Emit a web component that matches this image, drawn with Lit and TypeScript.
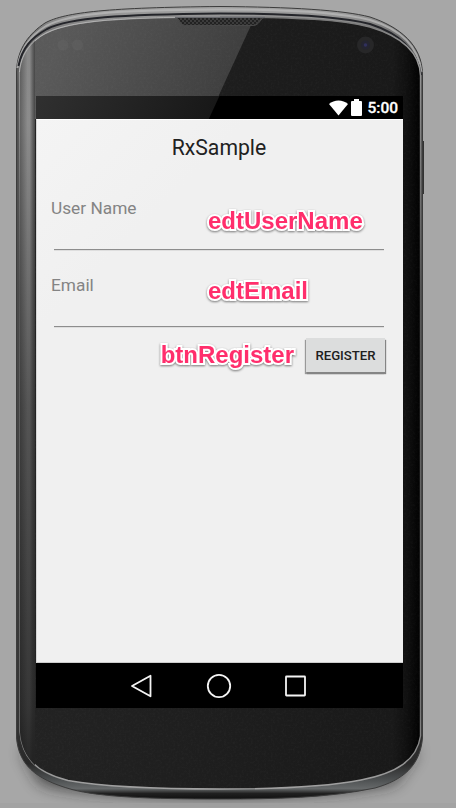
import { LitElement, html, css } from "lit";
import { customElement, property } from "lit/decorators.js";

@customElement("phone-shell")
class PhoneShell extends LitElement {
  static styles = css`
    :host { display: block; width: 456px; height: 808px; }
    svg { display: block; }
  `;
  render() {
    const inner = "M19.500 72 C21 56 29 42 46 33 C72 20 125 17 220 17 C300 17 342 20 370 27 C400 36 420 52 420.500 76 V736 C417 760 397 773 361 780 C325 787 275 789 220 789 C155 789 105 787 68 780.500 C34 772 22 756 20 732 Z";
    return html`<svg width="456" height="808" viewBox="0 0 456 808">
      <defs>
        <linearGradient id="rim" x1="0" y1="0" x2="0" y2="1">
          <stop offset="0" stop-color="#a6a6a6"/><stop offset=".03" stop-color="#777"/>
          <stop offset=".1" stop-color="#555"/><stop offset=".9" stop-color="#343434"/>
          <stop offset=".955" stop-color="#292929"/><stop offset=".975" stop-color="#4c4f50"/><stop offset=".987" stop-color="#66696a"/><stop offset=".993" stop-color="#202020"/><stop offset="1" stop-color="#111"/>
        </linearGradient>
        <linearGradient id="edge" x1="0" y1="0" x2="0" y2="1">
          <stop offset="0" stop-color="#777"/><stop offset=".05" stop-color="#999"/>
          <stop offset=".35" stop-color="#555"/><stop offset=".9" stop-color="#777"/><stop offset="1" stop-color="#a2a2a2"/>
        </linearGradient>
        <linearGradient id="face" x1="0" y1="0" x2="1" y2="0">
          <stop offset="0" stop-color="#232323"/><stop offset=".93" stop-color="#191919"/>
          <stop offset=".965" stop-color="#101010"/><stop offset="1" stop-color="#010101"/>
        </linearGradient>
        <linearGradient id="rail" x1="0" y1="0" x2="0" y2="1">
          <stop offset="0" stop-color="#888"/><stop offset=".12" stop-color="#8c8c8c"/>
          <stop offset=".5" stop-color="#555"/><stop offset=".9" stop-color="#363636"/><stop offset="1" stop-color="#232323"/>
        </linearGradient>
        <linearGradient id="railFade" x1="0" y1="0" x2="1" y2="0">
          <stop offset="0" stop-color="#111" stop-opacity=".35"/><stop offset=".5" stop-color="#111" stop-opacity="0"/>
          <stop offset=".65" stop-color="#111" stop-opacity="0"/><stop offset="1" stop-color="#222" stop-opacity=".65"/>
        </linearGradient>
        <linearGradient id="glare" gradientUnits="userSpaceOnUse" x1="60" y1="40" x2="235" y2="110">
          <stop offset="0" stop-color="#fff" stop-opacity=".25"/><stop offset="1" stop-color="#fff" stop-opacity=".14"/>
        </linearGradient>
        <pattern id="mesh" width="4" height="4" patternUnits="userSpaceOnUse">
          <rect width="4" height="4" fill="#3c3c3c"/><rect width="2" height="2" fill="#222"/><rect x="2" y="2" width="2" height="2" fill="#222"/>
        </pattern>
        <filter id="grain" x="0" y="0" width="100%" height="100%">
          <feTurbulence type="fractalNoise" baseFrequency=".45" numOctaves="2" seed="4"/>
          <feColorMatrix values="0 0 0 0 1  0 0 0 0 1  0 0 0 0 1  .25 0 0 0 -.09"/>
        </filter>
        <filter id="soft" x="-20%" y="-200%" width="140%" height="500%"><feGaussianBlur stdDeviation="8"/></filter>
        <clipPath id="inside"><path d=${inner}/></clipPath>
      </defs>
      <rect width="456" height="808" fill="#a7a7a7"/>
      <path d="M22 750 L418 750 L395 783 Q340 796 220 797 Q75 796 40 783 Z" fill="#222" opacity=".75" filter="url(#soft)"/>
      <rect y="803" width="456" height="5" fill="#a2a2a2" opacity=".65"/>
      <path d="M422 141 H424 V194 H422Z" fill="#333"/>
      <path d="M16.500 72 C17 48 30 33 45 23 C65 12 110 7.500 220 6.500 C290 7 343 10 370 17 C400 27 422 45 422.500 74 V738 C420 766 403 780 375 788 C328 798 275 799 220 799 C150 799 100 797 72 789.500 C34 779 19 764 16.500 738 Z" fill="url(#rim)" stroke="#3c3c3c"/>
      <path d="M17.500 68 C20 48 31 35 46 26 C68 14 110 10 220 9.500 C292 9.500 342 13 370 20 C397 28 418 44 421.500 72" fill="none" stroke="#b8b8b8" stroke-width="2" opacity=".8"/>
      <path d="M18.500 66 C22 48 31 38 47 29 C70 17.500 120 14.500 220 13.500 C292 13.500 342 17 370 24 C398 33 417 49 421 75" fill="none" stroke="#24252a" stroke-width="2"/>
      <path d=${inner} fill="url(#face)" stroke="url(#edge)" stroke-width="1.400"/>
      <g clip-path="url(#inside)">
        <rect x="34" y="16" width="386" height="774" filter="url(#grain)" opacity=".22"/>
        <path d="M34 10 H258 L208 119 H34Z" fill="url(#glare)"/>
        <rect x="20" y="34" width="15" height="746" fill="url(#rail)"/>
        <rect x="20" y="34" width="15" height="746" fill="url(#railFade)"/>
      </g>
      <path d="M19.500 72 C21 56 29 42 46 33 C72 20 125 17 220 17" fill="none" stroke="#c4c4c4" stroke-width=".9" opacity=".75"/>
      <path d="M175 17.500 H265 C260 17.500 260 25.500 253 25.500 H186 C179 25.500 180 17.500 175 17.500Z" fill="url(#mesh)" stroke="#484848"/>
      <path d="M175 17.200 H265" stroke="#77797e"/>
      <circle cx="63" cy="45" r="5.500" fill="#646464" opacity=".45"/><circle cx="77.500" cy="45" r="5.500" fill="#646464" opacity=".45"/>
      <circle cx="365.500" cy="45" r="8.500" fill="#272728"/><circle cx="365.500" cy="45" r="4.500" fill="#242430"/><circle cx="365.500" cy="45" r="1.800" fill="#30305c"/>
    </svg>`;
  }
}

@customElement("form-field")
class FormField extends LitElement {
  @property() label = "";
  static styles = css`
    :host { display: grid; grid-template-columns: 157px 1fr; height: 76.500px; box-sizing: border-box; position: relative; }
    .label { font: 17.300px/22px Roboto, sans-serif; color: #848484; }
    .line { position: absolute; left: 3px; right: 0; top: 52px; height: 1px; background: #8d8d8d; box-shadow: 0 1px 0 #dedede; }
  `;
  render() {
    return html`<span class="label">${this.label}</span><slot></slot><div class="line"></div>`;
  }
}

@customElement("note-tag")
class NoteTag extends LitElement {
  @property() text = "";
  static styles = css`
    :host { display: block; font: bold 24px/28px "Liberation Sans", Arial, sans-serif; color: #ff2e6c; white-space: nowrap; }
    span { display: block; -webkit-text-stroke: 4px #fff; paint-order: stroke fill; stroke-linejoin: round; filter: drop-shadow(0 1.500px 1px rgba(0,0,0,.5)); }
  `;
  render() { return html`<span>${this.text}</span>`; }
}

@customElement("app-root")
class AppRoot extends LitElement {
  static styles = css`
    :host { display: grid; width: 456px; height: 808px; overflow: hidden; }
    phone-shell, .screen { grid-area: 1 / 1; }
    .screen { margin: 96px 0 0 36px; width: 367px; height: 612px; display: flex; flex-direction: column; z-index: 1; font-family: Roboto, sans-serif; }
    .status { height: 23px; display: flex; align-items: center; justify-content: flex-end; padding-right: 5px; box-sizing: border-box; color: #fff; background: linear-gradient(114.800deg, #303030 0, #181818 166px, #000 167px); }
    .status svg { display: block; margin-right: 3px; }
    .clock { font: 500 15.500px/23px Roboto, sans-serif; margin-left: 2px; padding-top: 1px; -webkit-text-stroke: .3px #fff; }
    .content { height: 544px; box-sizing: border-box; border-left: 1px solid #d5d5d5; border-top: 1px solid #fff; border-bottom: 1px solid #ccc; background: linear-gradient(135deg, #f4f4f4 0, #f0f0f0 150px); padding: 13px 19px 0 14px; }
    .title { font-size: 21.200px; line-height: 29px; height: 64px; text-align: center; color: #212121; padding-left: 3px; }
    .first { padding-top: 10px; }
    .second { padding-top: 3px; }
    .actions { display: flex; justify-content: flex-end; align-items: flex-start; }
    .actions note-tag { margin: -9.500px 12px 0 0; }
    button { margin: -12px -1px 0 0; box-sizing: border-box; width: 79px; height: 34px; border: 0; padding: 0; background: #dcdddd; box-shadow: 1px 2px 1px #858585, -1px 2px 1px #999; font: 500 13.200px/33px Roboto, sans-serif; color: #202020; }
    .nav { height: 45px; background: #000; display: flex; align-items: center; justify-content: center; gap: 49px; padding-right: 2px; }
    .nav svg { display: block; fill: none; stroke: #f4f4f4; stroke-width: 1.800; }
  `;
  render() {
    return html`
      <phone-shell></phone-shell>
      <main class="screen">
        <div class="status">
          <svg width="19" height="16" viewBox="0 0 19 16"><path d="M0 4 C5-.8 14-.8 19 4 L9.500 15.500Z" fill="#fff"/></svg>
          <svg width="11" height="17" viewBox="0 0 11 17"><path d="M3 0H8V2H10Q11 2 11 3V16Q11 17 10 17H1Q0 17 0 16V3Q0 2 1 2H3Z" fill="#fff"/></svg>
          <span class="clock">5:00</span>
        </div>
        <section class="content">
          <div class="title">RxSample</div>
          <form-field label="User Name"><note-tag class="first" text="edtUserName"></note-tag></form-field>
          <form-field label="Email"><note-tag class="second" text="edtEmail"></note-tag></form-field>
          <div class="actions"><note-tag text="btnRegister"></note-tag><button>REGISTER</button></div>
        </section>
        <nav class="nav">
          <svg width="28" height="28" viewBox="0 0 28 28"><path d="M22.500 3.700V24.300L4 14Z" stroke-linejoin="round"/></svg>
          <svg width="28" height="28" viewBox="0 0 28 28"><circle cx="14" cy="14" r="11.200"/></svg>
          <svg width="28" height="28" viewBox="0 0 28 28"><rect x="4" y="4.500" width="19" height="19" rx=".5"/></svg>
        </nav>
      </main>`;
  }
}
